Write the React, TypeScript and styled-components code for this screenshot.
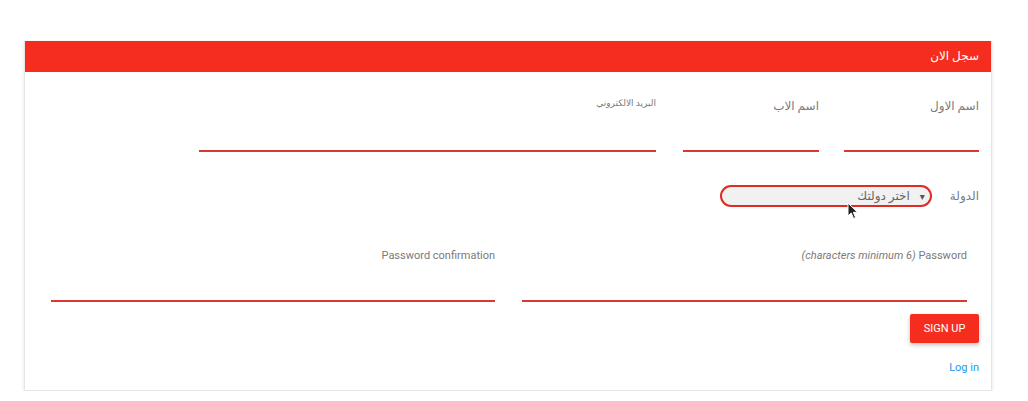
import { createGlobalStyle, styled } from "styled-components";

const GlobalStyle = createGlobalStyle`
  html, body {
    margin: 0;
    padding: 0;
    background: #fff;
    font-family: Roboto, "DejaVu Sans", sans-serif;
  }
`;

const FIRST_ROW = [
  { label: "اسم الاول", width: 135, small: false },
  { label: "اسم الاب", width: 136, small: false },
  { label: "البريد الالكتروني", width: 457, small: true },
];

function App() {
  return (
    <>
      <GlobalStyle />
      <Card>
        <Header>سجل الان</Header>
        <Body>
          <TopRow>
            {FIRST_ROW.map((f, id) => (
              <Field key={`field_${id}`} $width={f.width}>
                <Label $small={f.small}>{f.label}</Label>
                <Underline />
              </Field>
            ))}
          </TopRow>
          <CountryRow>
            <Label>الدولة</Label>
            <SelectWrap>
              <Select>
                <Caret>▾</Caret>
                <span>اختر دولتك</span>
              </Select>
              <Cursor width="12" height="18" viewBox="0 0 12 18">
                <path
                  d="M1 1 L1 14 L4.2 11 L6.6 16.5 L8.6 15.6 L6.3 10.3 L10.5 10.3 Z"
                  fill="#222"
                  stroke="#fff"
                  strokeWidth="1"
                />
              </Cursor>
            </SelectWrap>
          </CountryRow>
          <PasswordRow>
            <Field $width={445}>
              <Label $latin>
                <Hint>(characters minimum 6)</Hint> Password
              </Label>
              <Underline />
            </Field>
            <Field $width={444}>
              <Label $latin>Password confirmation</Label>
              <Underline />
            </Field>
          </PasswordRow>
          <Actions>
            <SignUp>SIGN UP</SignUp>
            <LoginLink href="#">Log in</LoginLink>
          </Actions>
        </Body>
      </Card>
    </>
  );
}

export default App;

const Card = styled.div`
  margin: 41px 0 0 24px;
  width: 966px;
  border: 1px solid #e6e6e6;
  border-top: none;
  box-shadow: 0 1px 3px rgba(0, 0, 0, 0.12);
  background: #fff;
`;

const Header = styled.div`
  height: 31px;
  line-height: 31px;
  background: #f52d1f;
  color: #fff;
  font-size: 12px;
  direction: rtl;
  padding-right: 12px;
`;

const Body = styled.div`
  direction: rtl;
  padding-bottom: 16px;
`;

const TopRow = styled.div`
  display: flex;
  gap: 25px;
  padding: 27px 12px 0 0;
  & > div:nth-child(2) {
    margin-left: 2px;
  }
`;

const Field = styled.div<{ $width: number }>`
  display: flex;
  flex-direction: column;
  width: ${(p) => p.$width}px;
  height: 53px;
`;

const Label = styled.div<{ $small?: boolean; $latin?: boolean }>`
  font-size: ${(p) => (p.$small ? "9px" : p.$latin ? "11px" : "12px")};
  color: #7a7a7a;
  line-height: 14px;
  margin-top: ${(p) => (p.$small ? "-3px" : "0")};
  direction: ${(p) => (p.$latin ? "ltr" : "rtl")};
  text-align: right;
  white-space: nowrap;
`;

const Hint = styled.i`
  font-style: italic;
`;

const Underline = styled.div`
  margin-top: auto;
  height: 2px;
  background: #d63b31;
`;

const CountryRow = styled.div`
  display: flex;
  align-items: center;
  gap: 18px;
  padding: 33px 12px 0 0;
`;

const SelectWrap = styled.div`
  position: relative;
`;

const Select = styled.div`
  box-sizing: border-box;
  width: 212px;
  height: 22px;
  border: 2px solid #e02a22;
  border-radius: 11px;
  background: #f1f1f1;
  display: flex;
  align-items: center;
  gap: 10px;
  padding-right: 5px;
  font-size: 12px;
  color: #666;
`;

const Caret = styled.span`
  font-size: 10px;
  color: #555;
`;

const Cursor = styled.svg`
  position: absolute;
  top: 17px;
  left: 127px;
`;

const PasswordRow = styled.div`
  display: flex;
  gap: 27px;
  padding: 42px 24px 0 0;
`;

const Actions = styled.div`
  display: flex;
  flex-direction: column;
  align-items: flex-start;
  padding: 12px 12px 0 0;
`;

const SignUp = styled.button`
  width: 69px;
  height: 29px;
  border: none;
  border-radius: 2px;
  background: #f52d1f;
  color: #fff;
  font-family: Roboto, sans-serif;
  font-size: 11px;
  box-shadow: 0 2px 4px rgba(0, 0, 0, 0.25);
  padding: 0;
`;

const LoginLink = styled.a`
  margin-top: 18px;
  color: #2196f3;
  font-size: 11px;
  text-decoration: none;
  direction: ltr;
`;
